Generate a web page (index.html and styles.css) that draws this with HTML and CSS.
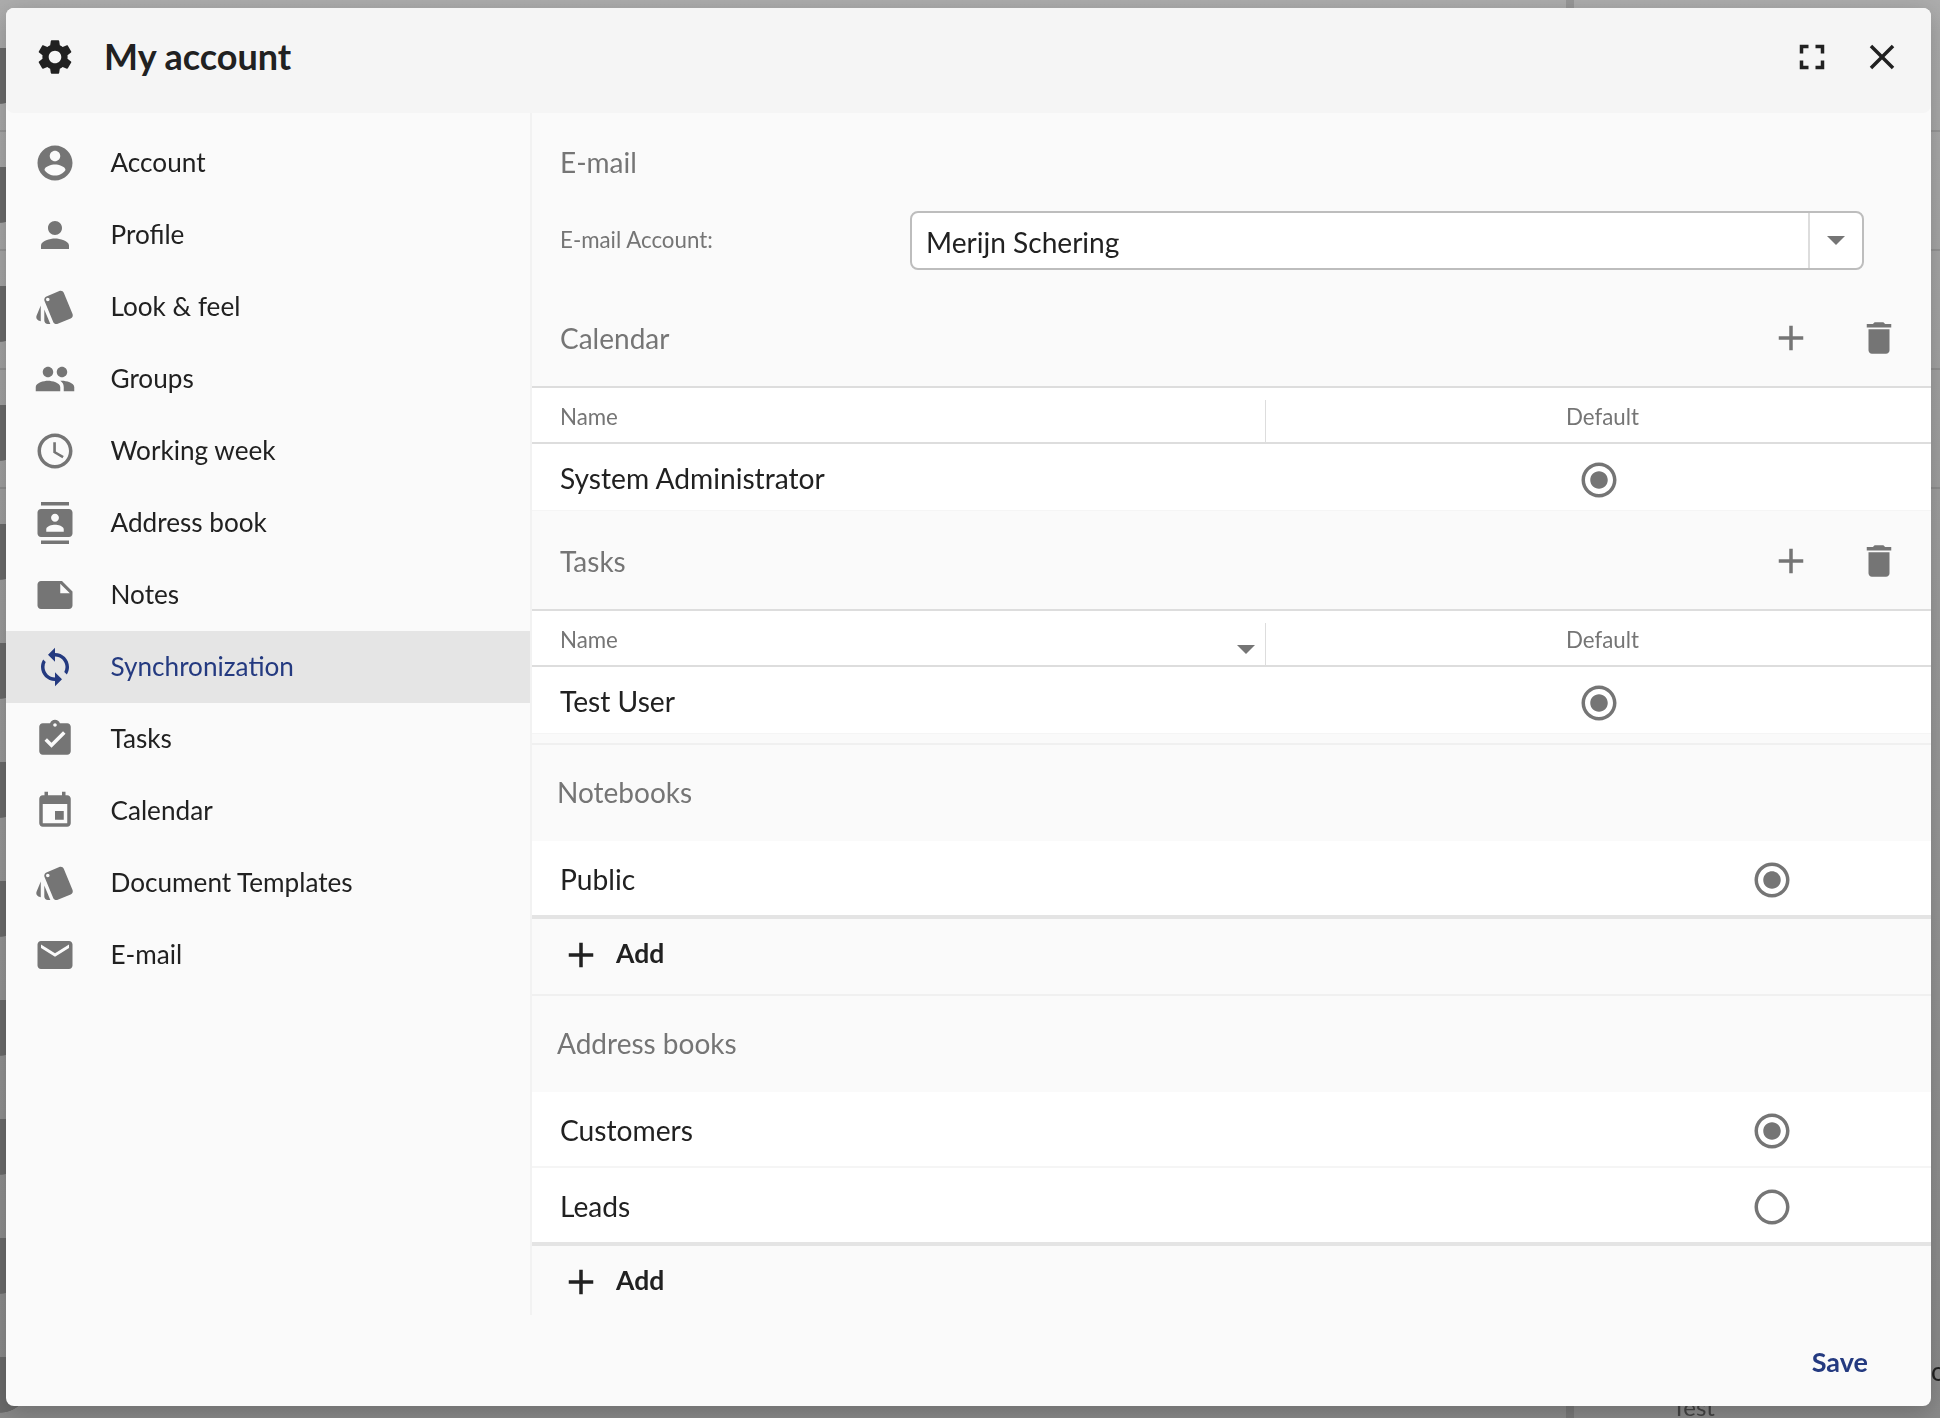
FILE: index.html
```html
<!DOCTYPE html>
<html lang="en">
<head>
    <meta charset="UTF-8">
    <title>My account</title>
    <link rel="stylesheet" href="styles.css">
</head>
<body>

    <svg class="sprite" xmlns="http://www.w3.org/2000/svg">
        <symbol id="i-settings" viewBox="0 0 24 24"><path d="M19.14 12.94c.04-.3.06-.61.06-.94 0-.32-.02-.64-.07-.94l2.03-1.58c.18-.14.23-.41.12-.61l-1.92-3.32c-.12-.22-.37-.29-.59-.22l-2.39.96c-.5-.38-1.03-.7-1.62-.94l-.36-2.54c-.04-.24-.24-.41-.48-.41h-3.84c-.24 0-.43.17-.47.41l-.36 2.54c-.59.24-1.13.57-1.62.94l-2.39-.96c-.22-.08-.47 0-.59.22L2.74 8.87c-.12.21-.08.47.12.61l2.03 1.58c-.05.3-.09.63-.09.94s.02.64.07.94l-2.03 1.58c-.18.14-.23.41-.12.61l1.92 3.32c.12.22.37.29.59.22l2.39-.96c.5.38 1.03.7 1.62.94l.36 2.54c.05.24.24.41.48.41h3.84c.24 0 .44-.17.47-.41l.36-2.54c.59-.24 1.13-.56 1.62-.94l2.39.96c.22.08.47 0 .59-.22l1.92-3.32c.12-.22.07-.47-.12-.61l-2.01-1.58zM12 15.6c-1.98 0-3.6-1.62-3.6-3.6s1.62-3.6 3.6-3.6 3.6 1.62 3.6 3.6-1.62 3.6-3.6 3.6z"/></symbol>
        <symbol id="i-fullscreen" viewBox="0 0 24 24"><path d="M7 14H5v5h5v-2H7v-3zm-2-4h2V7h3V5H5v5zm12 7h-3v2h5v-5h-2v3zM14 5v2h3v3h2V5h-5z"/></symbol>
        <symbol id="i-close" viewBox="0 0 24 24"><path d="M19 6.41L17.59 5 12 10.59 6.41 5 5 6.41 10.59 12 5 17.59 6.41 19 12 13.41 17.59 19 19 17.59 13.41 12z"/></symbol>
        <symbol id="i-account" viewBox="0 0 24 24"><path d="M12 2C6.48 2 2 6.48 2 12s4.48 10 10 10 10-4.48 10-10S17.52 2 12 2zm0 3c1.66 0 3 1.34 3 3s-1.34 3-3 3-3-1.34-3-3 1.34-3 3-3zm0 14.2c-2.5 0-4.71-1.28-6-3.22.03-1.99 4-3.08 6-3.08 1.99 0 5.97 1.09 6 3.08-1.29 1.94-3.5 3.22-6 3.22z"/></symbol>
        <symbol id="i-person" viewBox="0 0 24 24"><path d="M12 12c2.21 0 4-1.79 4-4s-1.79-4-4-4-4 1.79-4 4 1.79 4 4 4zm0 2c-2.67 0-8 1.34-8 4v2h16v-2c0-2.66-5.33-4-8-4z"/></symbol>
        <symbol id="i-style" viewBox="0 0 24 24"><path d="M2.53 19.65l1.34.56v-9.03l-2.43 5.86c-.41 1.02.08 2.19 1.09 2.61zm19.5-3.7L17.07 3.98c-.31-.75-1.04-1.21-1.81-1.23-.26 0-.53.04-.79.15L7.1 5.95c-.75.31-1.21 1.03-1.23 1.8-.01.27.04.54.15.8l4.96 11.97c.31.76 1.05 1.22 1.83 1.23.26 0 .52-.05.77-.15l7.36-3.05c1.02-.42 1.51-1.59 1.09-2.6zM7.88 8.75c-.55 0-1-.45-1-1s.45-1 1-1 1 .45 1 1-.45 1-1 1zm-2 11c0 1.1.9 2 2 2h1.45l-3.45-8.34v6.34z"/></symbol>
        <symbol id="i-group" viewBox="0 0 24 24"><path d="M16 11c1.66 0 2.99-1.34 2.99-3S17.66 5 16 5c-1.66 0-3 1.34-3 3s1.34 3 3 3zm-8 0c1.66 0 2.99-1.34 2.99-3S9.66 5 8 5C6.34 5 5 6.34 5 8s1.34 3 3 3zm0 2c-2.33 0-7 1.17-7 3.5V19h14v-2.5c0-2.33-4.67-3.5-7-3.5zm8 0c-.29 0-.62.02-.97.05 1.16.84 1.97 1.97 1.97 3.45V19h6v-2.5c0-2.33-4.67-3.5-7-3.5z"/></symbol>
        <symbol id="i-schedule" viewBox="0 0 24 24"><path d="M11.99 2C6.47 2 2 6.48 2 12s4.47 10 9.99 10C17.52 22 22 17.52 22 12S17.52 2 11.99 2zM12 20c-4.42 0-8-3.58-8-8s3.58-8 8-8 8 3.58 8 8-3.58 8-8 8zm.5-13H11v6l5.25 3.15.75-1.23-4.5-2.67z"/></symbol>
        <symbol id="i-contacts" viewBox="0 0 24 24"><path d="M20 0H4v2h16V0zM4 24h16v-2H4v2zM20 4H4c-1.1 0-2 .9-2 2v12c0 1.1.9 2 2 2h16c1.1 0 2-.9 2-2V6c0-1.1-.9-2-2-2zm-8 2.75c1.24 0 2.25 1.01 2.25 2.25s-1.01 2.25-2.25 2.25S9.75 10.24 9.75 9 10.76 6.75 12 6.75zM17 17H7v-1.5c0-1.67 3.33-2.5 5-2.5s5 .83 5 2.5V17z"/></symbol>
        <symbol id="i-note" viewBox="0 0 24 24"><path d="M22 10l-6-6H4c-1.1 0-2 .9-2 2v12.01c0 1.1.9 1.99 2 1.99l16-.01c1.1 0 2-.89 2-1.99v-8zm-7-4.5l5.5 5.5H15V5.5z"/></symbol>
        <symbol id="i-sync" viewBox="0 0 24 24"><path d="M12 4V1L8 5l4 4V6c3.31 0 6 2.69 6 6 0 1.01-.25 1.97-.7 2.8l1.46 1.46C19.54 15.03 20 13.57 20 12c0-4.42-3.58-8-8-8zm0 14c-3.31 0-6-2.69-6-6 0-1.01.25-1.97.7-2.8L5.24 7.74C4.46 8.97 4 10.43 4 12c0 4.42 3.58 8 8 8v3l4-4-4-4v3z"/></symbol>
        <symbol id="i-task" viewBox="0 0 24 24"><path d="M19 3h-4.18C14.4 1.84 13.3 1 12 1c-1.3 0-2.4.84-2.82 2H5c-1.1 0-2 .9-2 2v14c0 1.1.9 2 2 2h14c1.1 0 2-.9 2-2V5c0-1.1-.9-2-2-2zm-7 0c.55 0 1 .45 1 1s-.45 1-1 1-1-.45-1-1 .45-1 1-1zm-2 14l-4-4 1.41-1.41L10 14.17l6.59-6.59L18 9l-8 8z"/></symbol>
        <symbol id="i-event" viewBox="0 0 24 24"><path d="M17 12h-5v5h5v-5zM16 1v2H8V1H6v2H5c-1.11 0-1.99.9-1.99 2L3 19c0 1.1.89 2 2 2h14c1.1 0 2-.9 2-2V5c0-1.1-.9-2-2-2h-1V1h-2zm3 18H5V8h14v11z"/></symbol>
        <symbol id="i-email" viewBox="0 0 24 24"><path d="M20 4H4c-1.1 0-1.99.9-1.99 2L2 18c0 1.1.9 2 2 2h16c1.1 0 2-.9 2-2V6c0-1.1-.9-2-2-2zm0 4l-8 5-8-5V6l8 5 8-5v2z"/></symbol>
        <symbol id="i-add" viewBox="0 0 24 24"><path d="M19 13h-6v6h-2v-6H5v-2h6V5h2v6h6v2z"/></symbol>
        <symbol id="i-delete" viewBox="0 0 24 24"><path d="M6 19c0 1.1.9 2 2 2h8c1.1 0 2-.9 2-2V7H6v12zM19 4h-3.5l-1-1h-5l-1 1H5v2h14V4z"/></symbol>
        <symbol id="i-radio-on" viewBox="0 0 24 24"><path d="M12 7c-2.76 0-5 2.24-5 5s2.24 5 5 5 5-2.24 5-5-2.24-5-5-5zm0-5C6.48 2 2 6.48 2 12s4.48 10 10 10 10-4.48 10-10S17.52 2 12 2zm0 18c-4.42 0-8-3.58-8-8s3.58-8 8-8 8 3.58 8 8-3.58 8-8 8z"/></symbol>
        <symbol id="i-radio-off" viewBox="0 0 24 24"><path d="M12 2C6.48 2 2 6.48 2 12s4.48 10 10 10 10-4.48 10-10S17.52 2 12 2zm0 18c-4.42 0-8-3.58-8-8s3.58-8 8-8 8 3.58 8 8-3.58 8-8 8z"/></symbol>
    </svg>

    <!-- the page behind the dialog -->
    <div class="backdrop">
        <span class="behind-test">Test</span>
        <span class="behind-o">o</span>
    </div>

    <div class="dialog">
        <header class="dialog-header">
            <svg class="icon"><use href="#i-settings"/></svg>
            <h1>My account</h1>
            <svg class="icon"><use href="#i-fullscreen"/></svg>
            <svg class="icon"><use href="#i-close"/></svg>
        </header>

        <div class="dialog-body">
            <nav class="side-nav">
                <a class="nav-item"><svg class="icon"><use href="#i-account"/></svg>Account</a>
                <a class="nav-item"><svg class="icon"><use href="#i-person"/></svg>Profile</a>
                <a class="nav-item"><svg class="icon"><use href="#i-style"/></svg>Look &amp; feel</a>
                <a class="nav-item"><svg class="icon"><use href="#i-group"/></svg>Groups</a>
                <a class="nav-item"><svg class="icon"><use href="#i-schedule"/></svg>Working week</a>
                <a class="nav-item"><svg class="icon"><use href="#i-contacts"/></svg>Address book</a>
                <a class="nav-item"><svg class="icon"><use href="#i-note"/></svg>Notes</a>
                <a class="nav-item active"><svg class="icon"><use href="#i-sync"/></svg>Synchronization</a>
                <a class="nav-item"><svg class="icon"><use href="#i-task"/></svg>Tasks</a>
                <a class="nav-item"><svg class="icon"><use href="#i-event"/></svg>Calendar</a>
                <a class="nav-item"><svg class="icon"><use href="#i-style"/></svg>Document Templates</a>
                <a class="nav-item"><svg class="icon"><use href="#i-email"/></svg>E-mail</a>
            </nav>

            <main class="panel">
                <h3 class="section-title email-title">E-mail</h3>
                <div class="form-row">
                    <label>E-mail Account:</label>
                    <div class="combo">
                        <span class="combo-value">Merijn Schering</span>
                        <span class="combo-arrow"><i class="caret"></i></span>
                    </div>
                </div>

                <div class="section-head">
                    <h3 class="section-title">Calendar</h3>
                    <svg class="icon"><use href="#i-add"/></svg>
                    <svg class="icon"><use href="#i-delete"/></svg>
                </div>
                <div class="table-head">
                    <div class="col-name">Name</div>
                    <div class="col-default">Default</div>
                </div>
                <div class="table-row">
                    <div class="col-name">System Administrator</div>
                    <div class="col-radio"><svg class="icon"><use href="#i-radio-on"/></svg></div>
                </div>

                <div class="section-head">
                    <h3 class="section-title">Tasks</h3>
                    <svg class="icon"><use href="#i-add"/></svg>
                    <svg class="icon"><use href="#i-delete"/></svg>
                </div>
                <div class="table-head">
                    <div class="col-name">Name<i class="caret sort"></i></div>
                    <div class="col-default">Default</div>
                </div>
                <div class="table-row">
                    <div class="col-name">Test User</div>
                    <div class="col-radio"><svg class="icon"><use href="#i-radio-on"/></svg></div>
                </div>
                <div class="spacer"></div>

                <h3 class="section-title list-title">Notebooks</h3>
                <div class="list-row last">
                    <span>Public</span>
                    <svg class="icon"><use href="#i-radio-on"/></svg>
                </div>
                <button class="add-btn"><svg class="icon"><use href="#i-add"/></svg>Add</button>

                <h3 class="section-title list-title">Address books</h3>
                <div class="list-row">
                    <span>Customers</span>
                    <svg class="icon"><use href="#i-radio-on"/></svg>
                </div>
                <div class="list-row last">
                    <span>Leads</span>
                    <svg class="icon"><use href="#i-radio-off"/></svg>
                </div>
                <button class="add-btn"><svg class="icon"><use href="#i-add"/></svg>Add</button>
            </main>
        </div>

        <footer class="dialog-footer">
            <button class="save-btn">Save</button>
        </footer>
    </div>

</body>
</html>
```

FILE: styles.css
```css
* {
    box-sizing: border-box;
}
html, body {
    height: 100%;
}
body {
    margin: 0;
    padding: 8px 9px 12px 6px;
    display: flex;
    overflow: hidden;
    font-family: Lato, "Open Sans", sans-serif;
    color: #212121;
    background: linear-gradient(#adadad, #9e9e9e 40%, #8a8a8a);
}
.sprite {
    display: none;
}
.icon {
    width: 42px;
    height: 42px;
    flex: none;
    fill: #757575;
}

/* page behind the dialog */
.backdrop {
    position: fixed;
    inset: 0;
    background:
        linear-gradient(rgba(0,0,0,.12), rgba(0,0,0,.12)) 1566px 0 / 8px 100% no-repeat,
        radial-gradient(circle 29px at 0 27px, #6b6b6b 98%, transparent) 0 48px / 30px 119px repeat-y,
        linear-gradient(rgba(0,0,0,.1), rgba(0,0,0,.1)) 0 130px / 100% 2px no-repeat,
        linear-gradient(rgba(0,0,0,.1), rgba(0,0,0,.1)) 0 249px / 100% 2px no-repeat,
        linear-gradient(rgba(0,0,0,.1), rgba(0,0,0,.1)) 0 368px / 100% 2px no-repeat,
        linear-gradient(rgba(0,0,0,.1), rgba(0,0,0,.1)) 0 487px / 100% 2px no-repeat;
}
.behind-test {
    position: absolute;
    left: 1672px;
    top: 1392px;
    font-size: 24px;
    color: #444;
}
.behind-o {
    position: absolute;
    left: 1931px;
    top: 1355px;
    font-size: 26px;
    color: #222;
}

/* dialog */
.dialog {
    position: relative;
    flex: 1;
    display: flex;
    flex-direction: column;
    background: #fafafa;
    border-radius: 8px;
    box-shadow: 0 6px 24px rgba(0,0,0,.22);
}
.dialog-header {
    flex: none;
    height: 105px;
    display: flex;
    align-items: center;
    gap: 28px;
    padding: 0 28px 7px;
    background: #f5f5f5;
    border-radius: 8px;
}
.dialog-header .icon {
    fill: #212121;
}
.dialog-header h1 {
    flex: 1;
    margin: 0;
    padding-bottom: 2px;
    font-size: 36px;
    font-weight: 700;
}
.dialog-body {
    flex: 1;
    display: flex;
    min-height: 0;
}
.dialog-footer {
    flex: none;
    height: 91px;
    display: flex;
    justify-content: flex-end;
    align-items: center;
    padding: 1px 63px 0 0;
}
.save-btn {
    padding: 0;
    border: none;
    background: none;
    font-family: inherit;
    font-size: 27px;
    font-weight: 700;
    color: #243a80;
}

/* left menu */
.side-nav {
    flex: none;
    width: 524px;
    padding-top: 14px;
}
.nav-item {
    height: 72px;
    display: flex;
    align-items: center;
    gap: 34.5px;
    padding: 0 0 2px 28px;
    font-size: 26.15px;
}
.nav-item .icon {
    margin-top: 2px;
}
.nav-item.active {
    background: #e5e5e5;
    color: #243a80;
}
.nav-item.active .icon {
    fill: #243a80;
}

/* right panel */
.panel {
    flex: 1;
    border-left: 2px solid #f2f2f2;
}
.section-title {
    margin: 0;
    font-size: 28px;
    font-weight: 400;
    color: #757575;
}
.email-title {
    height: 98px;
    padding: 32px 0 0 28px;
}
.form-row {
    height: 59px;
    margin-bottom: 18px;
    display: flex;
    align-items: center;
    padding-left: 28px;
    color: #757575;
    font-size: 22.3px;
}
.form-row label {
    width: 350px;
    padding-bottom: 3px;
}
.combo {
    width: 954px;
    height: 59px;
    display: flex;
    background: #fff;
    border: 2px solid #bdbdbd;
    border-radius: 8px;
}
.combo-value {
    flex: 1;
    padding: 0 14px;
    font-size: 28.1px;
    line-height: 58px;
    color: #212121;
}
.combo-arrow {
    width: 54px;
    display: flex;
    justify-content: center;
    align-items: center;
    border-left: 2px solid #ddd;
}
.caret {
    width: 0;
    height: 0;
    border-left: 9px solid transparent;
    border-right: 9px solid transparent;
    border-top: 9px solid #757575;
}
.section-head {
    height: 98px;
    display: flex;
    align-items: center;
    gap: 46px;
    padding: 2px 31px 0 28px;
}
.section-head .section-title {
    flex: 1;
}
.table-head {
    height: 58px;
    display: flex;
    padding-top: 3px;
    background: #fff;
    border-top: 2px solid #ddd;
    border-bottom: 2px solid #ddd;
    font-size: 22.3px;
    color: #757575;
}
.table-head .col-name {
    width: 734px;
    display: flex;
    justify-content: space-between;
    align-items: center;
    padding: 0 11px 0 28px;
    position: relative;
}
.table-head .col-name::after {
    content: "";
    position: absolute;
    right: 0;
    top: 9px;
    bottom: 0;
    border-right: 1px solid #ddd;
}
.caret.sort {
    margin-top: 20px;
}
.table-head .col-default {
    flex: 1;
    display: flex;
    align-items: center;
    padding-left: 300px;
}
.table-row {
    height: 67px;
    display: flex;
    align-items: center;
    padding-top: 2px;
    background: #fff;
    border-bottom: 1px solid #f5f5f5;
    font-size: 28.2px;
}
.table-row .col-name {
    width: 734px;
    padding-left: 28px;
}
.table-row .col-radio {
    padding: 4px 0 0 312px;
    display: flex;
}
.spacer {
    height: 9px;
}
.list-title {
    height: 98px;
    padding: 30px 0 0 25px;
    border-top: 2px solid #f0f0f0;
}
.list-row {
    height: 76px;
    display: flex;
    justify-content: space-between;
    align-items: center;
    padding: 2px 138px 0 28px;
    background: #fff;
    border-bottom: 2px solid #f5f5f5;
    font-size: 28.2px;
}
.list-row .icon {
    margin-top: 2px;
}
.list-row.last {
    height: 78px;
    border-bottom: 4px solid #e4e4e4;
}
.add-btn {
    width: 100%;
    height: 75px;
    display: flex;
    align-items: center;
    gap: 14px;
    padding: 0 0 8px 28px;
    border: none;
    background: none;
    font-family: inherit;
    font-size: 26.5px;
    font-weight: 700;
    color: #212121;
}
.add-btn .icon {
    margin-top: 5px;
    fill: #212121;
}
```
